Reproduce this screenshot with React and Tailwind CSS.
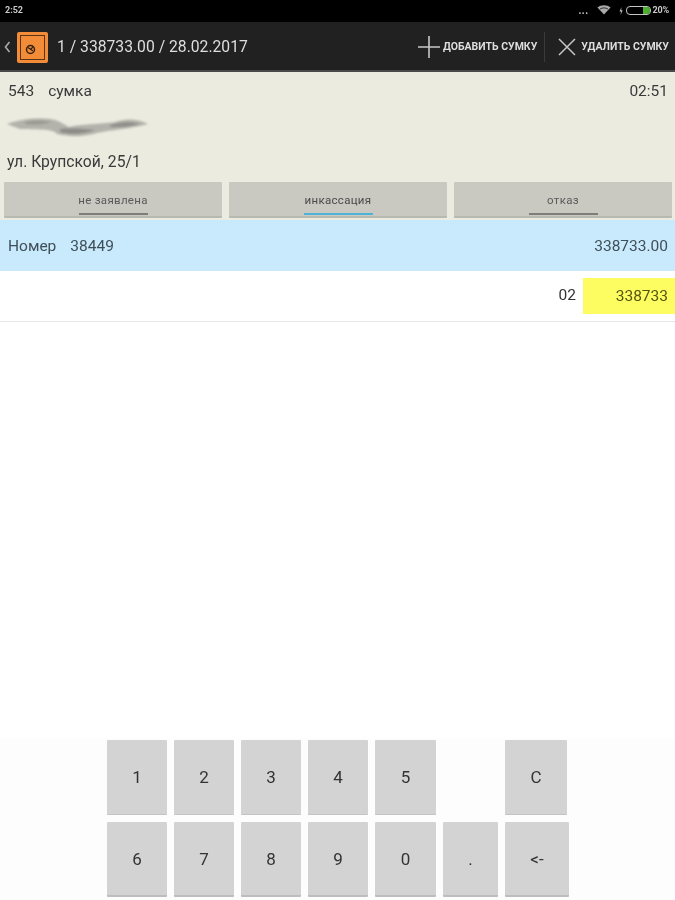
import React from 'react';

const font = { fontFamily: 'Roboto, "Noto Sans", sans-serif' };

const StatusBar = () => (
    <div className="h-[22px] bg-black flex items-center justify-between pl-[5px] pr-[6px] text-[#c9c9c9] text-[9px] font-bold">
        <span>2:52</span>
        <div className="flex items-center">
            <span className="mr-[8px] -mt-[2px] text-[10px] tracking-[0.5px]">...</span>
            <svg width="14" height="10" viewBox="0 0 14 10" className="mr-[8px] -mt-[2px]">
                <path d="M0.5 2.5C4 -0.5 10 -0.5 13.5 2.5L7 9.5Z" fill="#aaaaaa" />
                <path d="M3 4C5.5 2.5 8.5 2.5 11 4" stroke="#000" strokeWidth="0.7" fill="none" />
            </svg>
            <svg width="4" height="8" viewBox="0 0 4 8" className="mr-[3px] -mt-[1px]">
                <path d="M2.5 0L0.5 4.5H2L1.5 8L3.7 3.2H2.2Z" fill="#bbbbbb" />
            </svg>
            <div className="w-[25px] h-[9px] border border-[#c4c4c4] rounded-[4px] flex justify-end items-center mr-[2px] -mt-[1px]">
                <div className="w-[7px] h-[7px] bg-[#4caf2f] rounded-r-[3px]" />
            </div>
            <span className="tracking-[-0.2px]">20%</span>
        </div>
    </div>
);

const ToolBar = () => (
    <div className="h-[48px] bg-[#212121] flex items-center text-[#dedede] pt-[2px]">
        <svg width="7" height="12" viewBox="0 0 7 12" className="ml-[4px] mr-[6px]">
            <path d="M5.5 1L1.5 6L5.5 11" stroke="#a9a9a9" strokeWidth="1.6" fill="none" />
        </svg>
        <div className="w-[31px] h-[31px] bg-[#f28c38] rounded-[2px] flex items-center justify-center p-[3px]">
            <div className="w-full h-full border border-[#5c3413] flex items-end pl-[4px] pb-[4px]">
                <svg width="11" height="11" viewBox="0 0 11 11">
                    <circle cx="5.5" cy="5.5" r="4" stroke="#33200f" strokeWidth="1.5" fill="none" />
                    <path d="M3 3.5L8 7M5.5 5.5L8 3" stroke="#33200f" strokeWidth="1.3" />
                </svg>
            </div>
        </div>
        <span className="ml-[9px] text-[15.7px]">1 / 338733.00 / 28.02.2017</span>
        <div className="ml-auto flex items-center h-full pr-[6px]">
            <svg width="22" height="22" viewBox="0 0 22 22">
                <path d="M11 0V22M0 11H22" stroke="#c8c8c8" strokeWidth="1.6" />
            </svg>
            <span className="ml-[3px] text-[10.5px] font-bold whitespace-nowrap">ДОБАВИТЬ СУМКУ</span>
            <div className="w-px h-[30px] bg-[#3a3a3a] ml-[7px] mr-[13px]" />
            <svg width="18" height="18" viewBox="0 0 18 18">
                <path d="M1 1L17 17M17 1L1 17" stroke="#c8c8c8" strokeWidth="1.5" />
            </svg>
            <span className="ml-[5px] text-[10.5px] font-bold whitespace-nowrap">УДАЛИТЬ СУМКУ</span>
        </div>
    </div>
);

const StateButton = ({ label, bar, text }) => (
    <div className="flex-1 h-[36px] bg-[#c9c9c2] rounded-[1px] border-b-2 border-[#b9b9b2] flex flex-col items-center pt-[11px]">
        <span className={`text-[11.5px] leading-[15px] tracking-[0.3px] ${text}`}>{label}</span>
        <div className={`w-[69px] h-[2px] mt-[5px] ${bar}`} />
    </div>
);

const Key = ({ label, w = 'w-[60px]', edge = 'border-b-2 border-[#bdbdbd]' }) => (
    <div className={`${w} ${edge} h-full bg-[#d3d3d3] rounded-[1px] flex items-center justify-center pt-[2px] text-[17px] text-[#333333]`}>
        {label}
    </div>
);

const thinEdge = 'border-b border-[#c4c4c4]';

export default function App() {
    return (
        <div className="w-[675px] h-[900px] bg-white flex flex-col overflow-hidden blur-[0.4px]" style={font}>
            <StatusBar />
            <ToolBar />
            <div className="h-[2px] bg-[#4a4a4a]" />

            {/* Info panel */}
            <div className="h-[148px] bg-[#ebebe0] flex flex-col text-[#3a3a3a] text-[15.5px]">
                <div className="flex justify-between pl-[8px] pr-[7px] pt-[9px] leading-[20px]">
                    <span>
                        543<span className="ml-[14px]">сумка</span>
                    </span>
                    <span>02:51</span>
                </div>
                <div className="h-[50px] pl-[5px] pt-[16px]">
                    <svg width="150" height="24" viewBox="0 0 150 24">
                        <defs>
                            <filter id="smudge">
                                <feGaussianBlur stdDeviation="1.2" />
                            </filter>
                        </defs>
                        <g filter="url(#smudge)">
                            <path
                                d="M2 7C15 2 35 0 50 3C58 6 60 8 64 10C75 7 95 7 110 5C120 2 130 1 143 7C125 12 105 13 92 16C78 20 65 20 52 17C48 11 30 13 15 12Z"
                                fill="#b3b3ac"
                            />
                            <path d="M55 12C65 11 80 12 90 13C80 17 65 18 55 15Z" fill="#8c8c87" />
                            <path d="M20 5C28 3 38 3 46 5C38 8 28 8 20 7Z" fill="#9a9a94" />
                            <path d="M105 8C115 5 125 4 135 7C125 10 115 10 105 10Z" fill="#8f8f8a" />
                        </g>
                    </svg>
                </div>
                <div className="pl-[7px] mt-[1px] leading-[20px] text-[15.7px]">ул. Крупской, 25/1</div>
                <div className="flex gap-[7px] pl-[4px] pr-[3px] mt-[10px]">
                    <StateButton label="не заявлена" bar="bg-[#7d7d7a]" text="text-[#5a5a5a]" />
                    <StateButton label="инкассация" bar="bg-[#4fb3d9]" text="text-[#4a4a4a]" />
                    <StateButton label="отказ" bar="bg-[#7d7d7a]" text="text-[#5a5a5a]" />
                </div>
            </div>

            {/* Selected row */}
            <div className="h-[51px] bg-[#c9eafd] flex items-center justify-between pl-[8px] pr-[7px] pt-[2px] text-[15.5px] text-[#3f4f58]">
                <span>
                    Номер<span className="ml-[14px]">38449</span>
                </span>
                <span>338733.00</span>
            </div>

            {/* Bag row */}
            <div className="h-[51px] border-b border-[#e6e6e6] flex items-center justify-end text-[15.5px] text-[#333333]">
                <span className="mr-[7px]">02</span>
                <div className="w-[92px] h-[36px] bg-[#fdfd62] text-[#55550f] flex items-center justify-end pr-[7px] pt-[1px]">338733</div>
            </div>

            <div className="flex-1" />

            {/* Keypad */}
            <div className="h-[162px] bg-[#fdfdfd] pt-[2px] pl-[107px] flex flex-col gap-[7px]">
                <div className="h-[75px] flex">
                    <div className="flex gap-[7px]">
                        <Key label="1" edge={thinEdge} />
                        <Key label="2" edge={thinEdge} />
                        <Key label="3" edge={thinEdge} />
                        <Key label="4" edge={thinEdge} />
                        <Key label="5" w="w-[61px]" edge={thinEdge} />
                    </div>
                    <div className="ml-[69px]">
                        <Key label="C" w="w-[62px]" edge={thinEdge} />
                    </div>
                </div>
                <div className="h-[75px] flex">
                    <div className="flex gap-[7px]">
                        <Key label="6" />
                        <Key label="7" />
                        <Key label="8" />
                        <Key label="9" />
                        <Key label="0" w="w-[61px]" />
                        <Key label="." w="w-[55px]" />
                        <Key label="<-" w="w-[64px]" />
                    </div>
                </div>
            </div>
        </div>
    );
}
